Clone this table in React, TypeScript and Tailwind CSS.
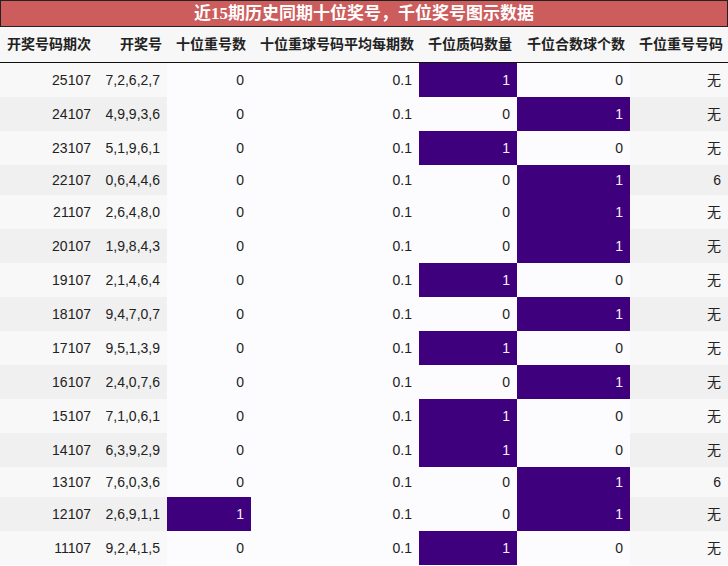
const rows = [
  { id: "25107", nums: "7,2,6,2,7", rep: 0, prime: 1, comp: 0, code: "无" },
  { id: "24107", nums: "4,9,9,3,6", rep: 0, prime: 0, comp: 1, code: "无" },
  { id: "23107", nums: "5,1,9,6,1", rep: 0, prime: 1, comp: 0, code: "无" },
  { id: "22107", nums: "0,6,4,4,6", rep: 0, prime: 0, comp: 1, code: "6" },
  { id: "21107", nums: "2,6,4,8,0", rep: 0, prime: 0, comp: 1, code: "无" },
  { id: "20107", nums: "1,9,8,4,3", rep: 0, prime: 0, comp: 1, code: "无" },
  { id: "19107", nums: "2,1,4,6,4", rep: 0, prime: 1, comp: 0, code: "无" },
  { id: "18107", nums: "9,4,7,0,7", rep: 0, prime: 0, comp: 1, code: "无" },
  { id: "17107", nums: "9,5,1,3,9", rep: 0, prime: 1, comp: 0, code: "无" },
  { id: "16107", nums: "2,4,0,7,6", rep: 0, prime: 0, comp: 1, code: "无" },
  { id: "15107", nums: "7,1,0,6,1", rep: 0, prime: 1, comp: 0, code: "无" },
  { id: "14107", nums: "6,3,9,2,9", rep: 0, prime: 1, comp: 0, code: "无" },
  { id: "13107", nums: "7,6,0,3,6", rep: 0, prime: 0, comp: 1, code: "6" },
  { id: "12107", nums: "2,6,9,1,1", rep: 1, prime: 0, comp: 1, code: "无" },
  { id: "11107", nums: "9,2,4,1,5", rep: 0, prime: 1, comp: 0, code: "无" },
];

const headers = [
  { label: "开奖号码期次", w: "w-[96px]" },
  { label: "开奖号", w: "w-[71px]" },
  { label: "十位重号数", w: "w-[84px]" },
  { label: "十位重球号码平均每期数", w: "w-[168px]" },
  { label: "千位质码数量", w: "w-[98px]" },
  { label: "千位合数球个数", w: "w-[113px]" },
  { label: "千位重号号码", w: "flex-1" },
];

function Heat({ v, w }: { v: number; w: string }) {
  return (
    <div
      className={`${w} h-full flex items-center justify-end pr-[7px] ${
        v === 1 ? "bg-[#3f007d] text-[#f4f0f8]" : "bg-[#fcfbfd] text-[#222]"
      }`}
    >
      {v}
    </div>
  );
}

export default function App() {
  return (
    <div
      className="w-[728px] h-[566px] overflow-hidden bg-white text-[14px] text-[#222]"
      style={{ fontFamily: '"Liberation Sans", "Noto Sans CJK SC", sans-serif' }}
    >
      {/* Title */}
      <div
        className="h-[27px] bg-[#cd5c5c] border border-[#222] flex items-center justify-center text-white text-[17px] font-bold leading-none"
        style={{ fontFamily: '"Liberation Serif", "Noto Sans CJK SC", serif' }}
      >
        近15期历史同期十位奖号，千位奖号图示数据
      </div>

      {/* Header */}
      <div className="h-[36px] flex bg-[#f7f7f7] border-b-[1.5px] border-[#111] font-bold">
        {headers.map((h) => (
          <div key={h.label} className={`${h.w} flex items-center justify-end pr-[5px] whitespace-nowrap`}>
            {h.label}
          </div>
        ))}
      </div>

      {/* Body */}
      {rows.map((r, i) => {
        const stripe = i % 2 === 0 ? "bg-[#f8f8f8]" : "bg-[#f0f0f0]";
        return (
          <div key={r.id} className={`flex ${r.code === "无" ? "h-[34px]" : "h-[30px]"}`}>
            <div className={`w-[96px] h-full flex items-center justify-end pr-[5px] ${stripe}`}>{r.id}</div>
            <div className={`w-[71px] h-full flex items-center justify-end pr-[7px] ${stripe}`}>{r.nums}</div>
            <Heat v={r.rep} w="w-[84px]" />
            <div className="w-[168px] h-full flex items-center justify-end pr-[7px] bg-[#fcfbfd]">0.1</div>
            <Heat v={r.prime} w="w-[98px]" />
            <Heat v={r.comp} w="w-[113px]" />
            <div className={`flex-1 h-full flex items-center justify-end pr-[7px] ${stripe}`}>{r.code}</div>
          </div>
        );
      })}
    </div>
  );
}
